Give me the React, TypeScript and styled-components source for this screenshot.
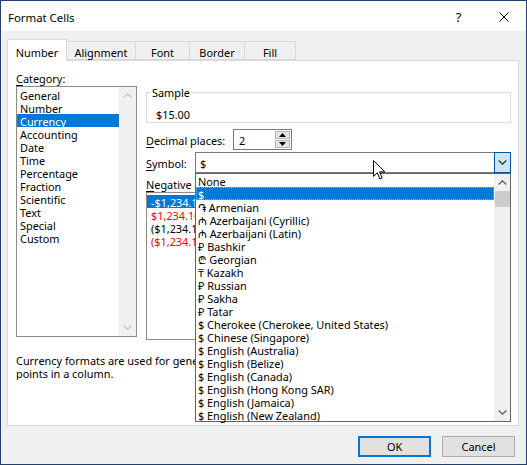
import React from "react";
import styled, { createGlobalStyle } from "styled-components";

const GlobalStyle = createGlobalStyle`
  html, body {
    margin: 0;
    padding: 0;
    background: #ffffff;
  }
  body {
    font-family: "Noto Sans", "Liberation Sans", "DejaVu Sans", sans-serif;
    font-size: 10.9px;
    color: #000;
  }
  * {
    box-sizing: border-box;
  }
`;

// Dialog frame
const Window = styled.div`
  position: relative;
  width: 527px;
  height: 465px;
  border: 1px solid #24406a;
  background: #f0f0f0;
  display: flex;
  flex-direction: column;
  overflow: hidden;
`;

const TitleBar = styled.div`
  height: 30px;
  flex-shrink: 0;
  background: #ffffff;
  display: flex;
  align-items: center;
  padding-left: 7px;
`;

const TitleText = styled.div`
  flex: 1;
  font-size: 11.4px;
  padding-top: 2px;
`;

const CaptionButton = styled.div`
  width: 45px;
  height: 30px;
  display: flex;
  align-items: center;
  justify-content: center;
  font-size: 13px;
  padding-top: 2px;
`;

const Body = styled.div`
  flex: 1;
  display: flex;
  flex-direction: column;
  padding: 8px 0 0 6px;
`;

// Tabs
const TabRow = styled.div`
  display: flex;
  align-items: flex-end;
  height: 22px;
`;

const Tab = styled.div<{ $active?: boolean; $w: number }>`
  position: relative;
  z-index: ${(p) => (p.$active ? 2 : 1)};
  width: ${(p) => p.$w}px;
  height: ${(p) => (p.$active ? 22 : 19)}px;
  margin-bottom: ${(p) => (p.$active ? 0 : 1)}px;
  margin-left: -1px;
  &:first-child {
    margin-left: 0;
  }
  background: ${(p) => (p.$active ? "#ffffff" : "#f0f0f0")};
  border: 1px solid #d9d9d9;
  border-bottom: ${(p) => (p.$active ? "none" : "1px solid #d9d9d9")};
  display: flex;
  align-items: center;
  justify-content: center;
  padding-top: ${(p) => (p.$active ? 3 : 4)}px;
  line-height: 15px;
`;

const Panel = styled.div`
  width: 512px;
  height: 366px;
  margin-top: -1px;
  background: #ffffff;
  border: 1px solid #d9d9d9;
  padding: 9px 6px 0 8px;
`;

const Columns = styled.div`
  display: grid;
  grid-template-columns: 121px 365px;
  column-gap: 9px;
`;

const LeftCol = styled.div`
  display: flex;
  flex-direction: column;
`;

const RightCol = styled.div`
  display: flex;
  flex-direction: column;
  padding-top: 14px;
`;

const FieldLabel = styled.div<{ $mt?: number }>`
  line-height: 15px;
  padding-top: 1px;
  margin-top: ${(p) => p.$mt ?? 0}px;
  white-space: nowrap;
  u {
    text-decoration-thickness: 1px;
    text-underline-offset: 2px;
  }
`;

const InlineLabel = styled.div<{ $w: number }>`
  width: ${(p) => p.$w}px;
  flex-shrink: 0;
  height: 21px;
  line-height: 19px;
  padding-top: 2px;
  white-space: nowrap;
  u {
    text-decoration-thickness: 1px;
    text-underline-offset: 2px;
  }
`;

// List boxes
const ListBox = styled.div<{ $h: number }>`
  height: ${(p) => p.$h}px;
  border: 1px solid #8c8c8c;
  background: #ffffff;
  display: flex;
  overflow: hidden;
`;

const ListItems = styled.div<{ $pt: number }>`
  flex: 1;
  padding-top: ${(p) => p.$pt}px;
  display: flex;
  flex-direction: column;
  min-width: 0;
`;

const ListRow = styled.div<{ $selected?: boolean; $red?: boolean; $fit?: boolean }>`
  height: 13px;
  line-height: 11px;
  padding-top: 2px;
  padding-left: ${(p) => (p.$fit ? 4 : 3)}px;
  padding-right: ${(p) => (p.$fit ? 4 : 0)}px;
  white-space: nowrap;
  width: ${(p) => (p.$fit ? "fit-content" : "auto")};
  background: ${(p) => (p.$selected ? "#0078d7" : "transparent")};
  color: ${(p) => (p.$selected ? "#ffffff" : p.$red ? "#ff0000" : "#000000")};
`;

const ScrollTrack = styled.div<{ $w: number }>`
  width: ${(p) => p.$w}px;
  flex-shrink: 0;
  background: #f0f0f0;
  display: flex;
  flex-direction: column;
`;

const ScrollArrow = styled.div`
  height: 17px;
  flex-shrink: 0;
  display: flex;
  align-items: center;
  justify-content: center;
`;

const ScrollSpace = styled.div`
  flex: 1;
`;

const ScrollThumb = styled.div`
  height: 16px;
  margin-left: 1px;
  background: #cdcdcd;
`;

// Sample group
const Group = styled.fieldset`
  margin: 0;
  padding: 7px 0 0 9px;
  border: 1px solid #dcdcdc;
  min-width: 0;
`;

const Legend = styled.legend`
  margin-left: -5px;
  padding: 1px 1px 0;
  line-height: 15px;
`;

const SampleValue = styled.div`
  line-height: 15px;
`;

const FormRow = styled.div<{ $mt: number }>`
  display: flex;
  align-items: flex-start;
  height: 21px;
  margin-top: ${(p) => p.$mt}px;
`;

// Spin box
const SpinBox = styled.div`
  width: 59px;
  height: 21px;
  border: 1px solid #7a7a7a;
  background: #ffffff;
  display: flex;
  align-items: center;
  padding: 1px 1px 1px 5px;
`;

const SpinValue = styled.div`
  flex: 1;
  padding-top: 2px;
`;

const SpinButtons = styled.div`
  width: 15px;
  height: 100%;
  display: flex;
  flex-direction: column;
  gap: 1px;
`;

const SpinButton = styled.div`
  flex: 1;
  background: #e5e5e5;
  border: 1px solid #b4b4b4;
  display: flex;
  align-items: center;
  justify-content: center;
`;

// Combo box with its open list
const Combo = styled.div`
  position: relative;
  width: 316px;
  height: 21px;
  border: 1px solid #7a7a7a;
  background: #ffffff;
  display: flex;
  align-items: center;
`;

const ComboValue = styled.div`
  flex: 1;
  padding: 2px 0 0 4px;
`;

const ComboButton = styled.div`
  width: 17px;
  align-self: stretch;
  margin: -1px -1px -1px 0;
  background: #cce4f7;
  border: 1px solid #005499;
  display: flex;
  align-items: center;
  justify-content: center;
`;

const DropList = styled.div`
  position: absolute;
  z-index: 5;
  top: 20px;
  left: -1px;
  width: 316px;
  height: 249px;
  border: 1px solid #646464;
  background: #ffffff;
  display: flex;
`;

const DropItems = styled.div`
  flex: 1;
  display: flex;
  flex-direction: column;
`;

const DropRow = styled.div<{ $selected?: boolean }>`
  height: 13px;
  line-height: ${(p) => (p.$selected ? 9 : 11)}px;
  padding-top: 2px;
  padding-left: ${(p) => (p.$selected ? 1 : 2)}px;
  white-space: nowrap;
  background: ${(p) => (p.$selected ? "#0078d7" : "transparent")};
  color: ${(p) => (p.$selected ? "#ffffff" : "#000000")};
  border: ${(p) => (p.$selected ? "1px dotted #f7a21b" : "none")};
`;

const Description = styled.div`
  width: 480px;
  margin-top: 13px;
  padding-top: 1px;
  line-height: 13px;
  white-space: nowrap;
  overflow: hidden;
`;

// Bottom buttons
const ButtonRow = styled.div`
  display: flex;
  justify-content: flex-end;
  gap: 11px;
  margin-top: 10px;
  padding-right: 11px;
`;

const DialogButton = styled.div<{ $default?: boolean }>`
  width: 73px;
  height: 21px;
  background: #e1e1e1;
  border: ${(p) => (p.$default ? "2px solid #0078d7" : "1px solid #adadad")};
  display: flex;
  align-items: center;
  justify-content: center;
`;

const Pointer = styled.svg`
  position: absolute;
  left: 372px;
  top: 159px;
  z-index: 10;
`;

const Chevron: React.FC<{ up?: boolean; color: string }> = ({ up, color }) => (
  <svg width="9" height="5" viewBox="0 0 9 5">
    <path
      d={up ? "M0.7 4.5 L4.5 0.8 L8.3 4.5" : "M0.7 0.5 L4.5 4.2 L8.3 0.5"}
      fill="none"
      stroke={color}
      strokeWidth="1.3"
    />
  </svg>
);

const Triangle: React.FC<{ up?: boolean }> = ({ up }) => (
  <svg width="7" height="4" viewBox="0 0 7 4">
    <path d={up ? "M0 4 L3.5 0 L7 4 Z" : "M0 0 L3.5 4 L7 0 Z"} fill="#000" />
  </svg>
);

const tabs = [
  { label: "Number", w: 60 },
  { label: "Alignment", w: 70 },
  { label: "Font", w: 55 },
  { label: "Border", w: 56 },
  { label: "Fill", w: 52 },
];

const categories = [
  "General",
  "Number",
  "Currency",
  "Accounting",
  "Date",
  "Time",
  "Percentage",
  "Fraction",
  "Scientific",
  "Text",
  "Special",
  "Custom",
];

const negatives = [
  { text: "-$1,234.10", red: false },
  { text: "$1,234.10", red: true },
  { text: "($1,234.10)", red: false },
  { text: "($1,234.10)", red: true },
];

const symbols = [
  "None",
  "$",
  "֏ Armenian",
  "₼ Azerbaijani (Cyrillic)",
  "₼ Azerbaijani (Latin)",
  "₽ Bashkir",
  "₾ Georgian",
  "₸ Kazakh",
  "₽ Russian",
  "₽ Sakha",
  "₽ Tatar",
  "$ Cherokee (Cherokee, United States)",
  "$ Chinese (Singapore)",
  "$ English (Australia)",
  "$ English (Belize)",
  "$ English (Canada)",
  "$ English (Hong Kong SAR)",
  "$ English (Jamaica)",
  "$ English (New Zealand)",
];

const App: React.FC = () => {
  return (
    <>
      <GlobalStyle />
      <Window>
        <TitleBar>
          <TitleText>Format Cells</TitleText>
          <CaptionButton>?</CaptionButton>
          <CaptionButton>
            <svg width="10" height="10" viewBox="0 0 10 10">
              <path d="M0.5 0.5 L9.5 9.5 M9.5 0.5 L0.5 9.5" stroke="#000" strokeWidth="1" />
            </svg>
          </CaptionButton>
        </TitleBar>

        <Body>
          <TabRow>
            {tabs.map((t, i) => (
              <Tab key={t.label} $w={t.w} $active={i === 0}>
                {t.label}
              </Tab>
            ))}
          </TabRow>

          <Panel>
            <Columns>
              <LeftCol>
                <FieldLabel>
                  <u>C</u>ategory:
                </FieldLabel>
                <ListBox $h={251}>
                  <ListItems $pt={1}>
                    {categories.map((c) => (
                      <ListRow key={c} $selected={c === "Currency"}>
                        {c}
                      </ListRow>
                    ))}
                  </ListItems>
                  <ScrollTrack $w={17}>
                    <ScrollArrow>
                      <Chevron up color="#c4c4c4" />
                    </ScrollArrow>
                    <ScrollSpace />
                    <ScrollArrow>
                      <Chevron color="#c4c4c4" />
                    </ScrollArrow>
                  </ScrollTrack>
                </ListBox>
              </LeftCol>

              <RightCol>
                <Group>
                  <Legend>Sample</Legend>
                  <SampleValue>$15.00</SampleValue>
                </Group>

                <FormRow $mt={6}>
                  <InlineLabel $w={87}>
                    <u>D</u>ecimal places:
                  </InlineLabel>
                  <SpinBox>
                    <SpinValue>2</SpinValue>
                    <SpinButtons>
                      <SpinButton>
                        <Triangle up />
                      </SpinButton>
                      <SpinButton>
                        <Triangle />
                      </SpinButton>
                    </SpinButtons>
                  </SpinBox>
                </FormRow>

                <FormRow $mt={2}>
                  <InlineLabel $w={49}>
                    <u>S</u>ymbol:
                  </InlineLabel>
                  <Combo>
                    <ComboValue>$</ComboValue>
                    <ComboButton>
                      <Chevron color="#333" />
                    </ComboButton>
                    <DropList>
                      <DropItems>
                        {symbols.map((s, i) => (
                          <DropRow key={s + i} $selected={i === 1}>
                            {s}
                          </DropRow>
                        ))}
                      </DropItems>
                      <ScrollTrack $w={16}>
                        <ScrollArrow>
                          <Chevron up color="#606060" />
                        </ScrollArrow>
                        <ScrollThumb />
                        <ScrollSpace />
                        <ScrollArrow>
                          <Chevron color="#606060" />
                        </ScrollArrow>
                      </ScrollTrack>
                    </DropList>
                  </Combo>
                </FormRow>

                <FieldLabel $mt={3}>
                  <u>N</u>egative numbers:
                </FieldLabel>
                <ListBox $h={148}>
                  <ListItems $pt={2}>
                    {negatives.map((n, i) => (
                      <ListRow key={i} $fit $selected={i === 0} $red={n.red}>
                        {n.text}
                      </ListRow>
                    ))}
                  </ListItems>
                </ListBox>
              </RightCol>
            </Columns>

            <Description>
              Currency formats are used for general monetary values. Use Accounting formats to align decimal
              <br />
              points in a column.
            </Description>
          </Panel>

          <ButtonRow>
            <DialogButton $default>OK</DialogButton>
            <DialogButton>Cancel</DialogButton>
          </ButtonRow>
        </Body>

        <Pointer width="13" height="21" viewBox="0 0 13 21">
          <path
            d="M0.5 0.5 L0.5 16.5 L4.3 12.8 L6.9 19 L9.2 18 L6.6 11.9 L11.8 11.9 Z"
            fill="#ffffff"
            stroke="#000000"
            strokeWidth="1"
            strokeLinejoin="miter"
          />
        </Pointer>
      </Window>
    </>
  );
};

export default App;
